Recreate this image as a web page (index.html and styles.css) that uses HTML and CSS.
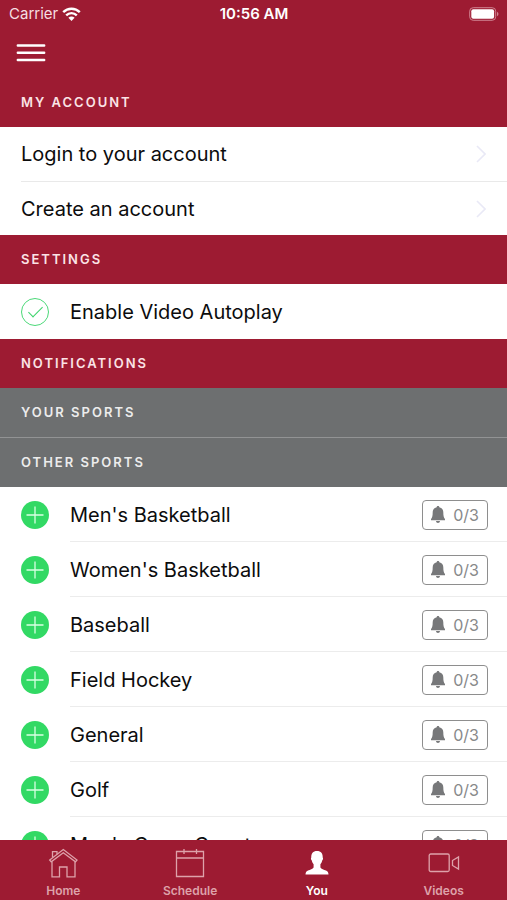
FILE: index.html
```html
<!DOCTYPE html>
<html lang="en">
<head>
<meta charset="utf-8">
<meta name="viewport" content="width=device-width, initial-scale=1">
<title>You</title>
<link rel="stylesheet" href="styles.css">
</head>
<body>
<svg class="defs" aria-hidden="true">
  <symbol id="plus" viewBox="0 0 28 28"><circle cx="14" cy="14" r="14" fill="#32d964"/><path d="M14 5.500v17M5.500 14h17" stroke="#d9ffe2" stroke-width="1.300" fill="none"/></symbol>
  <symbol id="bell" viewBox="0 0 14 17"><path d="M7 0c.8 0 1.300.5 1.300 1.300 2.600.6 4 2.500 4 5 0 4 .5 5.400 1.700 6.700v1.200H0V13c1.200-1.300 1.700-2.700 1.700-6.700 0-2.500 1.400-4.400 4-5C5.700.5 6.200 0 7 0zM5 14.900h4c-.1 1.200-.9 2-2 2s-1.900-.8-2-2z" fill="#77787a"/></symbol>
  <symbol id="chevron" viewBox="0 0 10 18"><path d="M1 1l8 8-8 8" fill="none" stroke="#e9e9f6" stroke-width="1.600"/></symbol>
</svg>
<header class="top">
  <div class="status">
    <span class="carrier">Carrier
      <svg width="19" height="14" viewBox="0 0 19 14" fill="none" stroke="#fff" stroke-width="2.400" aria-hidden="true"><path d="M1.200 5.200C5.800.6 13.200.6 17.800 5.200M4.200 8.300c3-2.900 7.600-2.900 10.600 0"/><path d="M9.500 14L6.400 10.700c1.700-1.600 4.500-1.600 6.200 0z" fill="#fff" stroke="none"/></svg>
    </span>
    <span class="time">10:56 AM</span>
    <svg class="battery" width="30" height="14" viewBox="0 0 30 14" aria-hidden="true"><rect x=".7" y=".7" width="26" height="12.600" rx="3.500" fill="none" stroke="#cf8390" stroke-width="1"/><rect x="2.300" y="2.300" width="22.800" height="9.400" rx="2" fill="#fff"/><path d="M28 4.800c2 .8 2 3.600 0 4.400z" fill="#cf8390"/></svg>
  </div>
  <button class="menu" aria-label="Menu"><svg width="30" height="20" viewBox="0 0 30 20" stroke="#fff" stroke-width="2.400" stroke-linecap="round"><path d="M1.800 2.500h26.400M1.800 9.700h26.400M1.800 17h26.400"/></svg></button>
</header>
<main class="content">
  <h2 class="heading">MY ACCOUNT</h2>
  <nav class="links" aria-label="Account">
    <a class="link" href="#login"><span>Login to your account</span><svg width="10" height="18"><use href="#chevron"/></svg></a>
    <a class="link" href="#create"><span>Create an account</span><svg width="10" height="18"><use href="#chevron"/></svg></a>
  </nav>
  <h2 class="heading">SETTINGS</h2>
  <label class="row setting"><input class="check" type="checkbox" checked><span class="name">Enable Video Autoplay</span></label>
  <h2 class="heading">NOTIFICATIONS</h2>
  <h3 class="heading sub">YOUR SPORTS</h3>
  <h3 class="heading sub divided">OTHER SPORTS</h3>
  <ul class="sports">
    <li class="row"><button class="add" aria-label="Add Men's Basketball"><svg width="28" height="28"><use href="#plus"/></svg></button><div class="body"><span class="name">Men's Basketball</span><button class="alerts"><svg width="14" height="17"><use href="#bell"/></svg>0/3</button></div></li>
    <li class="row"><button class="add" aria-label="Add Women's Basketball"><svg width="28" height="28"><use href="#plus"/></svg></button><div class="body"><span class="name">Women's Basketball</span><button class="alerts"><svg width="14" height="17"><use href="#bell"/></svg>0/3</button></div></li>
    <li class="row"><button class="add" aria-label="Add Baseball"><svg width="28" height="28"><use href="#plus"/></svg></button><div class="body"><span class="name">Baseball</span><button class="alerts"><svg width="14" height="17"><use href="#bell"/></svg>0/3</button></div></li>
    <li class="row"><button class="add" aria-label="Add Field Hockey"><svg width="28" height="28"><use href="#plus"/></svg></button><div class="body"><span class="name">Field Hockey</span><button class="alerts"><svg width="14" height="17"><use href="#bell"/></svg>0/3</button></div></li>
    <li class="row"><button class="add" aria-label="Add General"><svg width="28" height="28"><use href="#plus"/></svg></button><div class="body"><span class="name">General</span><button class="alerts"><svg width="14" height="17"><use href="#bell"/></svg>0/3</button></div></li>
    <li class="row"><button class="add" aria-label="Add Golf"><svg width="28" height="28"><use href="#plus"/></svg></button><div class="body"><span class="name">Golf</span><button class="alerts"><svg width="14" height="17"><use href="#bell"/></svg>0/3</button></div></li>
    <li class="row"><button class="add" aria-label="Add Men's Cross Country"><svg width="28" height="28"><use href="#plus"/></svg></button><div class="body"><span class="name">Men's Cross Country</span><button class="alerts"><svg width="14" height="17"><use href="#bell"/></svg>0/3</button></div></li>
  </ul>
</main>
<nav class="tabs" aria-label="Main">
  <a class="tab" href="#home"><svg width="32" height="32" viewBox="0 0 32 32" fill="none" stroke="currentColor" stroke-width="1.300"><path d="M5 14.500v15.300h7.500V20h7.500v9.800h8V14.500"/><path d="M2.700 13L16.300 2.500 30 13l-1.500 1.800L16.300 5.800 4.200 14.800z"/><path d="M5.500 10.500V4.700H10v2.500"/></svg>Home</a>
  <a class="tab" href="#schedule"><svg width="32" height="32" viewBox="0 0 32 32" fill="none" stroke="currentColor" stroke-width="1.300"><path d="M2.500 4.500h27v25h-27zM2.500 11h27M10 2v5M22.500 2v5"/></svg>Schedule</a>
  <a class="tab active" href="#you" aria-current="page"><svg width="32" height="32" viewBox="0 0 32 32" fill="currentColor"><path d="M16 4c4 0 6 2.600 5.700 6.600.6.500.4 2.400-.5 3-.4 1.800-1 2.800-1.800 3.600v3.300c.8 1.700 3.500 2.100 5.600 3 1.900.8 2.400 2 2.500 4H4.500c.1-2 .6-3.200 2.500-4 2.100-.9 4.800-1.300 5.600-3v-3.300c-.8-.8-1.400-1.800-1.800-3.600-.9-.6-1.100-2.500-.5-3C10 6.600 12 4 16 4z"/></svg>You</a>
  <a class="tab" href="#videos"><svg width="32" height="32" viewBox="0 0 32 32" fill="none" stroke="currentColor" stroke-width="1.300"><rect x="1.200" y="7" width="20" height="17.500" rx="1.500"/><path d="M24.500 13.500l6-3.500v12l-6-3.500z"/></svg>Videos</a>
</nav>
</body>
</html>
```
FILE: styles.css
```css
* { box-sizing: border-box; }

body {
  margin: 0;
  height: 100vh;
  display: flex;
  flex-direction: column;
  overflow: hidden;
  background: #fff;
  color: #0c0c0d;
  font-family: Inter, "Liberation Sans", sans-serif;
  font-size: 20px;
  line-height: 24px;
}

button {
  padding: 0;
  border: 0;
  background: none;
  font: inherit;
  color: inherit;
}

a { color: inherit; text-decoration: none; }
svg { display: block; flex: none; }
.defs { position: absolute; width: 0; height: 0; }

.top {
  flex: none;
  height: 78px;
  background: #9d1b32;
  color: #fff;
}

.status {
  display: grid;
  grid-template-columns: 1fr auto 1fr;
  align-items: center;
  height: 28px;
  padding: 0 8px 0 9px;
  font-size: 15px;
}

.carrier {
  display: flex;
  align-items: center;
  gap: 4px;
  color: #f6dfe2;
}

.time { font-weight: 600; }
.battery { justify-self: end; }

.menu { display: block; margin: 15px 16px; }

.content { flex: 1; min-height: 0; overflow: hidden; }

.heading {
  margin: 0;
  padding: 0 21px;
  background: #9d1b32;
  color: #fbe3e6;
  font-size: 13px;
  font-weight: 600;
  line-height: 49px;
  letter-spacing: 2px;
}

.sub { background: #6d6f70; color: #ececec; }
.divided { border-top: 1px solid #929394; }

.link {
  display: flex;
  align-items: center;
  justify-content: space-between;
  height: 54px;
  margin-left: 21px;
  padding-right: 21px;
}

.link + .link { border-top: 1px solid #e9e9e9; }

.row {
  display: flex;
  align-items: center;
  gap: 21px;
  height: 55px;
  padding-left: 21px;
}

.check {
  appearance: none;
  display: grid;
  place-items: center;
  width: 28px;
  height: 28px;
  margin: 0;
  border: 1px solid #4bd978;
  border-radius: 50%;
}

.check:checked::before {
  content: "";
  width: 6px;
  height: 13px;
  margin-bottom: 3px;
  border: solid #3bd36a;
  border-width: 0 1px 1px 0;
  transform: rotate(45deg);
}

.sports { margin: 0; padding: 0; list-style: none; }

.body {
  flex: 1;
  display: flex;
  align-items: center;
  justify-content: space-between;
  height: 55px;
  padding: 1px 19px 0 0;
  border-bottom: 1px solid #ececec;
}

.alerts {
  display: flex;
  align-items: center;
  justify-content: center;
  gap: 8px;
  width: 66px;
  height: 30px;
  border: 1px solid #8e8e8e;
  border-radius: 4px;
  color: #88898a;
  font-size: 16px;
}

.tabs {
  flex: none;
  display: grid;
  grid-template-columns: repeat(4, 1fr);
  height: 60px;
  background: #9d1b32;
}

.tab {
  display: flex;
  flex-direction: column;
  align-items: center;
  padding-top: 7px;
  color: #dea2aa;
  font-size: 12px;
  font-weight: 600;
}

.active { color: #fff; }
```
